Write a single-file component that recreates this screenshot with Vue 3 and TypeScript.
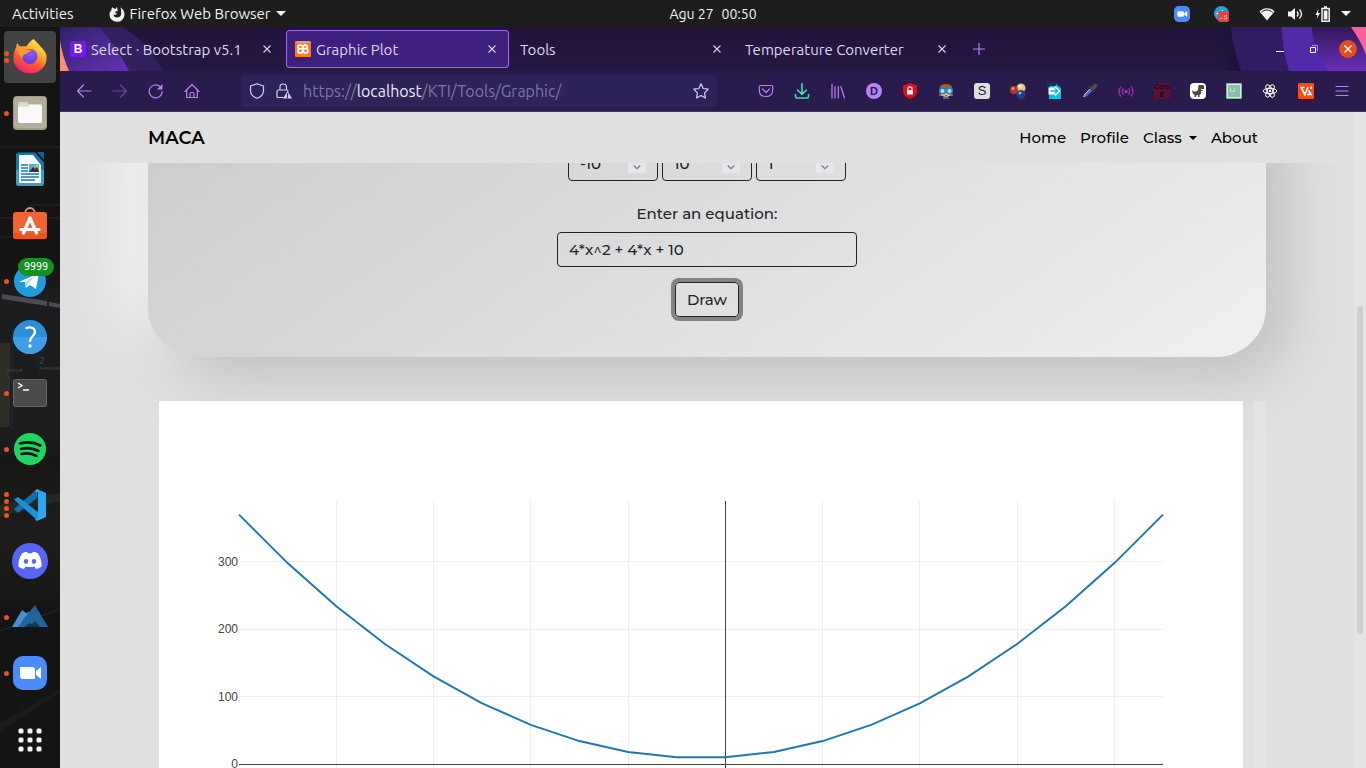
<script setup lang="ts">
import { computed, ref } from 'vue'

interface DockEntry {
  id: string
  label: string
  dots: number
  active?: boolean
}

const dock: DockEntry[] = [
  { id: 'firefox', label: 'Firefox', dots: 2, active: true },
  { id: 'files', label: 'Files', dots: 1 },
  { id: 'writer', label: 'LibreOffice Writer', dots: 0 },
  { id: 'software', label: 'Ubuntu Software', dots: 0 },
  { id: 'telegram', label: 'Telegram', dots: 1 },
  { id: 'help', label: 'Help', dots: 0 },
  { id: 'terminal', label: 'Terminal', dots: 1 },
  { id: 'spotify', label: 'Spotify', dots: 1 },
  { id: 'code', label: 'Visual Studio Code', dots: 4 },
  { id: 'discord', label: 'Discord', dots: 0 },
  { id: 'mountain', label: 'Mountain', dots: 1 },
  { id: 'zoom', label: 'Zoom', dots: 1 },
]

const tabs = [
  { id: 'bootstrap', title: 'Select · Bootstrap v5.1' },
  { id: 'plot', title: 'Graphic Plot' },
  { id: 'tools', title: 'Tools' },
  { id: 'temp', title: 'Temperature Converter' },
]
const activeTab = ref('plot')

const extensions = [
  'pocket', 'download', 'library', 'dark', 'blocker', 'reader', 'stylus', 'balls', 'forward',
  'picker', 'signal', 'cors', 'dino', 'frame', 'react', 'angle', 'menu',
]

const start = ref('-10')
const end = ref('10')
const step = ref('1')
const equation = ref('4*x^2 + 4*x + 10')
const ranges = [
  { id: 'start', label: 'Start', model: start },
  { id: 'end', label: 'End', model: end },
  { id: 'step', label: 'Step', model: step },
]

const scroll = { offset: 194, length: 328, total: 656 }
const thumbStyle = {
  top: `${(scroll.offset / scroll.total) * 100}%`,
  height: `${(scroll.length / scroll.total) * 100}%`,
}

const plot = { left: 80, right: 1004, top: 100, zero: 363, perHundred: 67.4 }
const unit = (plot.right - plot.left) / 19
const px = (x: number) => plot.left + (x + 10) * unit
const py = (y: number) => plot.zero - (y * plot.perHundred) / 100
const curve = computed(() =>
  Array.from({ length: 20 }, (_, i) => i - 10)
    .map((x) => `${px(x).toFixed(1)},${py(4 * x * x + 4 * x + 10).toFixed(1)}`)
    .join(' '),
)
const columns = [-8, -6, -4, -2, 2, 4, 6, 8].map((x) => Math.floor(px(x)))
const rows = [100, 200, 300].map((v) => ({
  value: v,
  y: Math.floor(py(v)),
  baseline: Math.round(py(v)) + 4,
}))
</script>

<template>
  <div class="desktop">
    <header class="topbar">
      <div class="top-left">
        <button type="button">Activities</button>
        <button type="button" class="app-menu">
          <svg width="16" height="16" viewBox="0 0 16 16"><path d="M8 0.5 6.8 3C5 2.5 4 2 3.2 1.2 2.6 2 2.4 3 2.5 4 1 5.5.4 7 .5 8.800A7.500 7.200 0 0 0 15.500 8.500C15.500 5 13.500 2.500 11 1.200 12 2.500 12.300 4 12 5.500 12.800 8.500 11.500 11.500 8 11.500 6 11.500 4.700 10.300 4.500 8.500 6 9.300 7.500 8.500 8 7.500 6.500 7.200 6 6.500 6 5.800L8.500 5C9 3.500 8 2.500 8 .5z" fill="#f2f2f2" /></svg>
          <span>Firefox Web Browser</span>
          <svg width="10" height="6" viewBox="0 0 10 6"><path d="M0 0H10L5 5z" fill="#f2f2f2" /></svg>
        </button>
      </div>
      <div class="clock"><span>Agu 27</span><span>00:50</span></div>
      <div class="top-right">
        <svg class="tray-zoom" width="16" height="16" viewBox="0 0 34 34"><rect width="34" height="34" rx="10" fill="#4a8cff" /><rect x="7" y="11" width="14" height="12" rx="3" fill="#fff" /><path d="M22 15l6-4v12l-6-4z" fill="#fff" /></svg>
        <svg class="tray-tg" width="16" height="16" viewBox="0 0 16 16"><circle cx="7.500" cy="7.500" r="7.500" fill="#2ca0dc" /><path d="M2 7.500 9 4v2L5 9z" fill="#fff" /><rect x="4" y="5" width="11" height="11" rx="2" fill="#f43b3b" /><path d="M5.500 12.500h1M7.500 12.500h1M13 9.500h-2.500v1.500h2v2h-2.500" stroke="#ffd0d0" fill="none" stroke-width=".8" /></svg>
        <svg class="tray-wifi" width="16" height="14" viewBox="0 0 16 14"><path d="M.5 4.500C4.500 0 11.500 0 15.500 4.500L8 13.500z" fill="#f2f2f2" /><path d="M2.300 5.300C5.500 2.300 10.500 2.300 13.700 5.300" stroke="#1d1d1d" stroke-width="1" fill="none" /></svg>
        <svg class="tray-vol" width="16" height="14" viewBox="0 0 16 14"><path d="M1 4.500h3L8 1v12L4 9.500H1z" fill="#f2f2f2" /><path d="M10 4.500q2 2.500 0 5M12.500 2.500q4 4.500 0 9" stroke="#f2f2f2" stroke-width="1.400" fill="none" /></svg>
        <svg class="tray-bat" width="16" height="16" viewBox="0 0 16 16"><path d="M3.500 3 .5 9h2l-.8 4L5 7H3z" fill="#f2f2f2" /><path d="M9 1h3M7 2.500h7.200v12.700H7z" stroke="#f2f2f2" stroke-width="1.500" fill="none" /><path d="M8.700 4.500h3.800v9H8.700z" fill="#f2f2f2" /></svg>
        <svg class="tray-caret" width="10" height="6" viewBox="0 0 10 6"><path d="M0 0H10L5 5z" fill="#f2f2f2" /></svg>
      </div>
    </header>

    <div class="workspace">
      <nav class="dock" aria-label="Dock">
        <svg class="dock-photo" width="60" height="741" viewBox="0 0 60 741" aria-hidden="true">
          <defs>
            <linearGradient id="wall" x1="0" y1="0" x2="0" y2="1"><stop offset="0" stop-color="#141414" /><stop offset=".15" stop-color="#1c1d1f" /><stop offset=".85" stop-color="#1b1c1e" /><stop offset="1" stop-color="#161616" /></linearGradient>
            <linearGradient id="haze" x1="0" y1="0" x2="0" y2="1"><stop offset="0" stop-color="#161616" /><stop offset=".5" stop-color="#1e1d1b" /><stop offset="1" stop-color="#161616" /></linearGradient>
          </defs>
          <path d="M0 120h60M30 178h30M0 191h60M0 210h48" stroke="#332e24" stroke-width="1" opacity=".7" />
          <path d="M0 240h60v200H0z" fill="url(#wall)" />
          <path d="M2 267l45 7v5L2 272zM49 275l11 2v4l-11-2z" fill="#4d4956" />
          <path d="M0 316h10v84H0z" fill="#2f2d28" />
          <path d="M12 308v95M38 326v14" stroke="#292a2c" />
          <text x="39" y="337" class="sign big">2</text><text x="39" y="343" class="sign">Avenue</text><text x="7" y="345" class="sign">renue</text>
          <path d="M0 430h60v150H0z" fill="url(#haze)" />
          <path d="M0 478q34-8 60-12v8Q30 482 0 490z" fill="#282621" />
          <path d="M0 604 60 582" stroke="#2b2b2b" />
          <path d="M0 696 60 662v4L0 704z" fill="#1b1b1a" />
        </svg>
        <button v-for="app in dock" :key="app.id" type="button" class="dock-item" :class="{ active: app.active }" :aria-label="app.label">
          <span class="dots"><i v-for="n in app.dots" :key="n"></i></span>
          <svg v-if="app.id === 'firefox'" width="36" height="36" viewBox="0 0 36 36">
            <defs>
              <linearGradient id="ffa" x1=".8" y1="0" x2=".3" y2="1"><stop offset="0" stop-color="#fff44f" /><stop offset=".35" stop-color="#ffb22c" /><stop offset=".65" stop-color="#ff5a36" /><stop offset="1" stop-color="#e91e78" /></linearGradient>
              <radialGradient id="ffb" cx=".55" cy=".3" r=".7"><stop offset="0" stop-color="#9059ff" /><stop offset="1" stop-color="#5b3fd0" /></radialGradient>
            </defs>
            <path d="M22 0c1 2 5 5 7 8 5 5 6 8 5.500 12A16.500 15 0 0 1 1.500 19C1.500 14 3 10 4.500 8 4 6.500 4.500 4.500 5.500 4 6 6 7 7 9 7.500c2-.5 4-.5 5.500 0C16 5 19 1 22 0z" fill="url(#ffa)" />
            <circle cx="18" cy="17.500" r="7.500" fill="url(#ffb)" />
            <path d="M5.500 8.500c3-.5 6-.5 9 2.500h5c-1 2-4 2-5 4-1.500 0-4 1-4 4-3-2-4-5-5-10.500z" fill="#ff9a2c" />
          </svg>
          <svg v-else-if="app.id === 'files'" width="36" height="36" viewBox="0 0 36 36"><rect x="1" y="1" width="34" height="34" rx="4" fill="#a39b8a" /><rect x="2" y="2" width="32" height="31" rx="3" fill="#b3ad9e" /><path d="M6 9q0-2 2-2h7l2 2h11q2 0 2 2v15q0 2-2 2H8q-2 0-2-2z" fill="#dcd8cd" /><path d="M6 13q0-1.500 2-1.500h8L18 10h10q2 0 2 2v14q0 2-2 2H8q-2 0-2-2z" fill="#fafafa" /></svg>
          <svg v-else-if="app.id === 'writer'" width="36" height="36" viewBox="0 0 36 36"><path d="M6 1.500h17l9 10V32q0 3-3 3H7q-3 0-3-3V3z" fill="#1878ac" /><path d="M4 19h28v13q0 3-3 3H7q-3 0-3-3z" fill="#3c9bcf" /><path d="M7 4h14l8 10v18H7z" fill="#f8fbfd" /><path d="M25 1h7v8z" fill="#146090" /><path d="M9 14h7M9 17h7M9 20h7M9 23h18M9 26h18M9 29h14" stroke="#1878ac" stroke-width="1.500" /><path d="M17 13h10v8H17z" fill="#69a8c8" /><path d="M17 21l4-5 2 2 2-2 2 5z" fill="#333" /><circle cx="25" cy="15" r="1.200" fill="#ffc82e" /></svg>
          <svg v-else-if="app.id === 'software'" width="36" height="36" viewBox="0 0 36 36"><path d="M13 7c0-8 10-8 10 0" stroke="#bfa980" stroke-width="1.800" fill="none" /><rect x="1" y="5" width="34" height="27" rx="3" fill="#f26332" /><path d="M1 26h34v3q0 3-3 3H4q-3 0-3-3z" fill="#e95420" /><path d="M18 11 11.500 26M18 11l6.500 15M9 22.500h18" stroke="#fff" stroke-width="3.200" stroke-linecap="round" stroke-linejoin="round" fill="none" /></svg>
          <svg v-else-if="app.id === 'telegram'" width="36" height="36" viewBox="0 0 36 36"><circle cx="18" cy="18" r="16" fill="#239bd8" /><path d="M7 19 27 10l-3 16-6-4-4 3-1-6z" fill="#fff" /><path d="M13 19 24 12l-8 9-2 4z" fill="#b9dcec" /></svg>
          <svg v-else-if="app.id === 'help'" width="36" height="36" viewBox="0 0 36 36"><circle cx="18" cy="18" r="17" fill="#2b8edb" /><path d="M1 18a17 17 0 0 0 34 0z" fill="#3f9fe6" /><path d="M13.500 9.500q5-2.500 8.500.5c2.500 3 0 6-2 8-1.500 1.500-2 2.500-2 5" fill="none" stroke="#fff" stroke-width="2.400" /><circle cx="18" cy="27" r="1.700" fill="#fff" /></svg>
          <svg v-else-if="app.id === 'terminal'" width="36" height="36" viewBox="0 0 36 36"><rect x="1" y="4" width="34" height="28" rx="3" fill="#666" /><rect x="2" y="5" width="32" height="26" rx="2" fill="#4b4b4b" /><path d="M6 8l4 2.500L6 13M11 15h6" stroke="#fff" stroke-width="1.400" fill="none" /></svg>
          <svg v-else-if="app.id === 'spotify'" width="36" height="36" viewBox="0 0 36 36"><circle cx="18" cy="18" r="16" fill="#1ed760" /><path d="M8 12.500q11-3 20.500 2M9 18q9-2.500 17.500 2M9.500 23q8-2 15 2" stroke="#111" stroke-width="2.600" stroke-linecap="round" fill="none" /></svg>
          <svg v-else-if="app.id === 'code'" width="36" height="36" viewBox="0 0 36 36"><path d="M2 22 25 2v9L6 26z" fill="#0f6fae" /><path d="M2 12.500 6 10 26 25v9z" fill="#1c8fd6" /><path d="M25 2l9 4v24l-9 4-3-2q4 1 4-3V7q0-3-4-2z" fill="#2ba6f0" /></svg>
          <svg v-else-if="app.id === 'discord'" width="36" height="36" viewBox="0 0 36 36"><circle cx="18" cy="18" r="18" fill="#5865f2" /><path d="M10 10.500q2-1.500 5-1.700l1 1.500h4l1-1.500q3 .2 5 1.700 4 6 3.500 13-2.500 2-5.500 2.500l-1.500-2.500q-4.500 1-9 0L12 26q-3-.5-5.500-2.500Q6 16.500 10 10.500z" fill="#fff" /><ellipse cx="14" cy="18.500" rx="2.200" ry="2.400" fill="#5865f2" /><ellipse cx="22" cy="18.500" rx="2.200" ry="2.400" fill="#5865f2" /></svg>
          <svg v-else-if="app.id === 'mountain'" width="36" height="36" viewBox="0 0 36 36"><path d="M0 28 10 11l4 3 3-1 3 8v7z" fill="#4a90d0" /><path d="M6 28l8-11 9-11 13 22z" fill="#1f659c" /><path d="M13 28l4-4 3 1 3-3 5 6z" fill="#123c44" /></svg>
          <svg v-else width="36" height="36" viewBox="0 0 36 36"><rect x="1" y="1" width="34" height="34" rx="10" fill="#4a8cff" /><path d="M8 12h12q3 0 3 3v9H11q-3 0-3-3zM24 16l5-4v12l-5-4z" fill="#fff" /></svg>
          <span v-if="app.id === 'telegram'" class="count">9999</span>
        </button>
        <button type="button" class="dock-item show-apps" aria-label="Show applications">
          <svg width="36" height="36" viewBox="0 0 36 36" fill="#f4f4f4"><g v-for="r in 3" :key="r"><rect v-for="c in 3" :key="c" :x="c * 9 - 2.500" :y="r * 9 - 2.500" width="5" height="5" rx="1.500" /></g></svg>
        </button>
      </nav>

      <section class="browser">
        <div class="tabstrip">
          <svg class="wave" width="180" height="44" viewBox="0 0 180 44" aria-hidden="true">
            <defs><linearGradient id="wl" x1="0" y1="0" x2="1" y2="1"><stop offset="0" stop-color="#30206a" /><stop offset="1" stop-color="#6733b4" /></linearGradient></defs>
            <path d="M0 0h62q26 14 41 44H0z" fill="#33205f" /><path d="M0 0h39q18 20 30 44H0z" fill="url(#wl)" /><path d="M0 14q3 17 9 30H0z" fill="#ff8f70" />
          </svg>
          <svg class="wave end" width="150" height="44" viewBox="0 0 150 44" aria-hidden="true">
            <defs>
              <linearGradient id="wr" x1="0" y1="0" x2="0" y2="1"><stop offset="0" stop-color="#31195c" /><stop offset="1" stop-color="#6a2fb7" /></linearGradient>
              <linearGradient id="wd" x1="0" y1="0" x2="1" y2="0"><stop offset="0" stop-color="#1c1038" stop-opacity="0" /><stop offset="1" stop-color="#1b0e37" /></linearGradient>
            </defs>
            <path d="M0 0h15l11 44H0z" fill="url(#wd)" /><path d="M15 0h135v44H25Q17 23 15 0z" fill="#321c62" /><path d="M66 0h84v44H73Q66 22 66 0z" fill="#5129a9" /><path d="M96 0h54v44h-38Q96 20 96 0z" fill="url(#wr)" /><path d="M135 0h15v28Q145 14 135 0z" fill="#ff5e9d" />
          </svg>
          <div class="tabs" role="tablist">
            <div v-for="tab in tabs" :key="tab.id" class="tab" :class="{ current: tab.id === activeTab }">
              <button type="button" role="tab" class="tab-title" :aria-selected="tab.id === activeTab" @click="activeTab = tab.id">
                <span v-if="tab.id === 'bootstrap'" class="fav-b">B</span>
                <svg v-if="tab.id === 'plot'" width="16" height="16" viewBox="0 0 16 16"><rect width="16" height="16" rx="1" fill="#fb7a24" /><path d="M2 1h12" stroke="#ffc08d" /><path d="M5.500 7.700h5M5.500 4.200a1.900 1.900 0 1 0 0 3.500 2.200 2.200 0 1 0 1.700 3.300L8 9.500l.8 1.500a2.200 2.200 0 1 0 1.700-3.300 1.900 1.900 0 1 0-1.700-3L8 6l-.8-1.300Q6.500 4 5.500 4.200z" fill="none" stroke="#fff" stroke-width="1.800" /></svg>
                <span>{{ tab.title }}</span>
              </button>
              <button type="button" class="tab-close" :aria-label="`Close ${tab.title}`"><svg width="8" height="8" viewBox="0 0 8 8"><path d="M.5.5l7 7M7.500.5l-7 7" stroke="#d9d2f0" stroke-width="1.100" /></svg></button>
            </div>
          </div>
          <button type="button" class="new-tab" aria-label="New tab"><svg width="12" height="12" viewBox="0 0 12 12"><path d="M6 0v12M0 6h12" stroke="#b884f4" stroke-width="1.200" /></svg></button>
          <div class="window-buttons">
            <button type="button" aria-label="Minimize"><svg width="8" height="8" viewBox="0 0 8 8"><path d="M0 6.500h8" stroke="#fff" /></svg></button>
            <button type="button" aria-label="Restore"><svg width="8" height="8" viewBox="0 0 8 8"><path d="M.5 2.500h5v5h-5z" stroke="#fff" fill="none" /><path d="M2 .5h5.500V6" stroke="#a691d8" fill="none" /></svg></button>
            <button type="button" class="quit" aria-label="Close window"><svg width="8" height="8" viewBox="0 0 8 8"><path d="M.5.5l7 7M7.500.5l-7 7" stroke="#fff" stroke-width="1.400" /></svg></button>
          </div>
        </div>

        <div class="toolbar">
          <button type="button" aria-label="Back"><svg width="16" height="16" viewBox="0 0 16 16" class="line"><path d="M15 8H1.500M7.500 2 1.500 8l6 6" /></svg></button>
          <button type="button" class="dim" aria-label="Forward"><svg width="16" height="16" viewBox="0 0 16 16" class="line"><path d="M1 8h13.500M8.500 2l6 6-6 6" /></svg></button>
          <button type="button" aria-label="Reload"><svg width="16" height="16" viewBox="0 0 16 16" class="line"><path d="M14.200 8.500A6.500 6.500 0 1 1 12 3.500" /><path d="M14.500 1v5.500H9z" fill="#b884f4" stroke="none" /></svg></button>
          <button type="button" aria-label="Home"><svg width="16" height="16" viewBox="0 0 16 16" class="line"><path d="M1 8.500 8 1.500l7 7M2.700 7.500v7h10.600v-7M6 14.500v-4q0-1 1-1h2q1 0 1 1v4" /></svg></button>
          <div class="urlbar">
            <svg width="16" height="16" viewBox="0 0 16 16" class="line pale"><path d="M8 .8 14.500 3v4.500Q14.500 13 8 15.300 1.500 13 1.500 7.500V3z" /></svg>
            <svg width="16" height="16" viewBox="0 0 16 16" class="line pale"><path d="M4 7V4q0-3 3.200-3T10.500 4v3M7 14.500H2q-1 0-1-1V8q0-1 1-1h9q1 0 1 1" /><path d="M11.500 8 16 15.500H7z" fill="#d8cff0" stroke="none" /><path d="M11.500 10.500v2.500M11.500 14v1" stroke="#2d2358" /></svg>
            <a href="https://localhost/KTI/Tools/Graphic/" class="url">https://<b>localhost</b>/KTI/Tools/Graphic/</a>
            <svg width="16" height="16" viewBox="0 0 16 16" class="line pale star"><path d="M8 .8l2.200 4.700 5 .7-3.600 3.600.8 5.200L8 12.500 3.600 15l.8-5.200L.8 6.200l5-.7z" /></svg>
          </div>
          <div class="extensions">
            <button v-for="name in extensions" :key="name" type="button" :aria-label="name">
              <svg v-if="name === 'pocket'" width="16" height="16" viewBox="0 0 16 16" class="line"><path d="M2.500 2.500h11q1.200 0 1.200 1.200V7q0 6.500-6.700 6.500T1.300 7V3.700q0-1.200 1.200-1.200zM4.500 6 8 9.500 11.500 6" /></svg>
              <svg v-else-if="name === 'download'" width="16" height="16" viewBox="0 0 16 16" class="line green"><path d="M8 .5v10.500M3.500 7 8 11.300 12.500 7M1.500 11.500v2q0 1.500 1.500 1.500h10q1.500 0 1.500-1.500v-2" /></svg>
              <svg v-else-if="name === 'library'" width="16" height="16" viewBox="0 0 16 16" class="line"><path d="M2 1v14M5 3.500V15M8.300 3.500V15M10.800 3.500 14.500 15" /></svg>
              <span v-else-if="name === 'dark'" class="ext-d">D</span>
              <svg v-else-if="name === 'blocker'" width="16" height="16" viewBox="0 0 16 16"><path d="M8 0l7 2.500V8q0 5.500-7 8-7-2.500-7-8V2.500z" fill="#e80b14" /><path d="M6 8V5.500q0-1.700 2-1.700t2 1.700V8" stroke="#fff" stroke-width="1.200" fill="none" /><path d="M5 7.200h6v4.300H5z" fill="#fff" /></svg>
              <svg v-else-if="name === 'reader'" width="16" height="16" viewBox="0 0 16 16"><path d="M2 9Q0 1 8 1t6 8l1 4H1z" fill="#9a6528" /><path d="M3 6h10v6q-5 4-10 0z" fill="#f0b78a" /><circle cx="4.500" cy="8" r="2.800" fill="#b5e2fb" stroke="#1c80d0" stroke-width="1.500" /><circle cx="11.500" cy="8" r="2.800" fill="#b5e2fb" stroke="#1c80d0" stroke-width="1.500" /><path d="M7 12.500h2" stroke="#b5553c" /><path d="M5 15h6" stroke="#3d91cc" stroke-width="1.500" /></svg>
              <span v-else-if="name === 'stylus'" class="ext-s">S</span>
              <svg v-else-if="name === 'balls'" width="16" height="16" viewBox="0 0 16 16"><circle cx="11" cy="5" r="4.500" fill="#e6c982" /><circle cx="4" cy="7" r="4" fill="#b9382b" /><circle cx="11" cy="11.500" r="4.500" fill="#27417f" /><circle cx="3" cy="5.500" r="1.300" fill="#f6b0a0" /><circle cx="10" cy="3.500" r="1.400" fill="#fff4d2" /><circle cx="10" cy="10" r="1.500" fill="#8eaaf0" /></svg>
              <svg v-else-if="name === 'forward'" width="16" height="16" viewBox="0 0 16 16"><path d="M3 1h7l5 4v11H3z" fill="#08c4e2" /><path d="M1 0h9v3H4v3H1z" fill="#063c64" /><path d="M2.500 4.500h6.500V2.500L14.500 8 9 13.500v-2H2.500z" fill="#fff" /><path d="M4.500 8h7M9 5.500 11.500 8 9 10.500" stroke="#08b6d8" fill="none" stroke-width="1.400" /></svg>
              <svg v-else-if="name === 'picker'" width="16" height="16" viewBox="0 0 16 16"><path d="M1.500 14.500 2.500 11.500 8.500 5.500l2 2-6 6z" fill="#536ddc" /><path d="M1.500 14l1.500-3 5.500-5.500" stroke="#c7cbe5" fill="none" /><path d="M7.500 4l4.500 4.500" stroke="#3b3b3b" stroke-width="2" stroke-linecap="round" /><path d="M10.500 5.500l3-3" stroke="#4d4d4d" stroke-width="4" stroke-linecap="round" /></svg>
              <svg v-else-if="name === 'signal'" width="16" height="16" viewBox="0 0 16 16"><circle cx="8" cy="8.500" r="1.700" fill="#b423c9" /><path d="M5.500 5.500q-2.500 3 0 6M10.500 5.500q2.500 3 0 6M3 3.500q-4 5 0 10M13 3.500q4 5 0 10" stroke="#9a2db5" stroke-width="1.300" fill="none" /></svg>
              <span v-else-if="name === 'cors'" class="ext-cors">Cors<br />E</span>
              <svg v-else-if="name === 'dino'" width="16" height="16" viewBox="0 0 16 16"><rect width="16" height="16" rx="4" fill="#fff" /><path d="M8.500 2h4.500l1 1v3h-3v1h1.500v1H11v2.500L9.500 12v2H8v-2H7l-1 1v1H4.500v-2L2.500 10V7L4 8.500h2L8 7z" fill="#4b4b4b" /></svg>
              <svg v-else-if="name === 'frame'" width="16" height="16" viewBox="0 0 16 16"><rect width="16" height="16" rx="1" fill="#79b89a" /><path d="M1.500 1.500h13v13h-13z" stroke="#d8eee2" fill="#8ac0a5" /><path d="M4.500 8.500h4v-4M4.500 4.500v4" stroke="#c5e3d3" fill="none" /></svg>
              <svg v-else-if="name === 'react'" width="16" height="16" viewBox="0 0 16 16"><rect width="16" height="16" fill="#251d43" /><g fill="none" stroke="#fff"><ellipse cx="8" cy="8" rx="6.800" ry="2.700" /><ellipse cx="8" cy="8" rx="6.800" ry="2.700" transform="rotate(60 8 8)" /><ellipse cx="8" cy="8" rx="6.800" ry="2.700" transform="rotate(120 8 8)" /></g><circle cx="8" cy="8" r="1.200" fill="#fff" /></svg>
              <svg v-else-if="name === 'angle'" width="16" height="16" viewBox="0 0 16 16"><rect width="16" height="16" rx="1" fill="#ff4a12" /><path d="M6.500 4.500H3.200L6.800 11.500 10.200 4M9 11.500h4L10.500 7.500M13 3.500v2.500" stroke="#fff" stroke-width="1.700" fill="none" /></svg>
              <svg v-else width="16" height="16" viewBox="0 0 16 16" class="line"><path d="M2 3.500h12M2 8h12M2 12.500h12" /></svg>
            </button>
          </div>
        </div>

        <div class="viewport">
          <div class="site">
            <nav class="navbar">
              <a href="#" class="brand">MACA</a>
              <ul>
                <li><a href="#">Home</a></li>
                <li><a href="#">Profile</a></li>
                <li><a href="#" class="dropdown">Class</a></li>
                <li><a href="#">About</a></li>
              </ul>
            </nav>
            <main class="content">
              <form class="card" @submit.prevent>
                <div class="range-row">
                  <div v-for="field in ranges" :key="field.id" class="number">
                    <input :id="field.id" v-model="field.model.value" type="number" :aria-label="field.label" />
                    <span class="spinner"><svg width="8" height="5" viewBox="0 0 8 5"><path d="M.7.5 4 3.800 7.300.5" fill="none" stroke="#85858f" stroke-width="1.500" /></svg></span>
                  </div>
                </div>
                <label for="equation">Enter an equation:</label>
                <input id="equation" v-model="equation" type="text" class="equation" />
                <button type="submit" class="draw">Draw</button>
              </form>
              <section class="chart">
                <svg viewBox="0 0 1084 450" role="img" aria-label="Plot of the equation">
                  <rect width="1084" height="450" fill="#fff" />
                  <g stroke="#eee">
                    <path v-for="x in columns" :key="x" :d="`M${x + 0.5} 100V370`" />
                    <path v-for="row in rows" :key="row.value" :d="`M80 ${row.y + 0.5}H1004`" />
                  </g>
                  <path d="M566.500 100V370M80 363.500H1004" stroke="#444" />
                  <polyline :points="curve" fill="none" stroke="#1f77b4" stroke-width="2" />
                  <g class="ticks">
                    <text v-for="row in rows" :key="row.value" x="79" :y="row.baseline">{{ row.value }}</text>
                    <text x="79" y="367">0</text>
                  </g>
                </svg>
                <div class="chart-track"></div>
              </section>
            </main>
          </div>
          <div class="scrollbar"><div class="thumb" :style="thumbStyle"></div></div>
        </div>
      </section>
    </div>
  </div>
</template>

<style>
body {
  margin: 0;
  overflow: hidden;
}
</style>

<style scoped>
* {
  box-sizing: border-box;
}
button {
  border: 0;
  padding: 0;
  background: none;
  font: inherit;
  color: inherit;
}
svg {
  display: block;
  flex: none;
}
a {
  color: inherit;
  text-decoration: none;
}
.desktop {
  display: flex;
  flex-direction: column;
  height: 100vh;
  overflow: hidden;
  background: #171717;
  font-family: Ubuntu, "Open Sans", "Noto Sans", sans-serif;
  font-size: 15px;
  color: #f2f2f2;
}
.topbar {
  display: grid;
  grid-template-columns: 1fr auto 1fr;
  align-items: center;
  height: 27px;
  flex: none;
  background: #1d1d1d;
}
.top-left,
.app-menu,
.top-right {
  display: flex;
  align-items: center;
}
.top-left {
  padding-left: 12px;
  gap: 35px;
}
.app-menu {
  gap: 5px;
}
.clock {
  display: flex;
  gap: 8px;
  padding-left: 60px;
  font-size: 14px;
}
.top-right {
  justify-content: flex-end;
  padding-right: 15px;
}
.tray-zoom {
  margin-right: 24px;
}
.tray-tg {
  margin-right: 29px;
}
.tray-wifi {
  margin-right: 12px;
}
.tray-vol {
  margin-right: 12px;
}
.tray-bat {
  margin-right: 10px;
}
.workspace {
  display: flex;
  flex: 1;
  min-height: 0;
}
.dock {
  position: relative;
  display: flex;
  flex-direction: column;
  width: 60px;
  flex: none;
  padding-top: 2px;
  background: #141414;
  overflow: hidden;
}
.dock-photo {
  position: absolute;
  inset: 0;
}
.sign {
  font-size: 6px;
  fill: #4c4f52;
}
.big {
  font-size: 10px;
}
.dock-item {
  position: relative;
  display: flex;
  align-items: center;
  justify-content: center;
  height: 52px;
  margin: 2px 4px;
  flex: none;
  border-radius: 4px;
}
.active {
  background: #434343;
}
.dots {
  position: absolute;
  left: 0;
  display: flex;
  flex-direction: column;
  gap: 2px;
}
.dots i {
  width: 5px;
  height: 5px;
  border-radius: 50%;
  background: #e95420;
}
.count {
  position: absolute;
  top: 3px;
  left: 14px;
  width: 36px;
  height: 18px;
  border-radius: 9px;
  background: #12921f;
  color: #fff;
  font: 10px/18px "DejaVu Sans Mono", monospace;
  text-align: center;
}
.show-apps {
  margin-top: auto;
}
.browser {
  display: flex;
  flex: 1;
  flex-direction: column;
  min-width: 0;
}
.tabstrip {
  position: relative;
  display: flex;
  align-items: center;
  height: 44px;
  flex: none;
  background: linear-gradient(#21133c, #261844);
  color: #dfd8f2;
}
.wave {
  position: absolute;
  left: 0;
  top: 0;
}
.end {
  left: auto;
  right: 0;
  width: 150px;
}
.tabs {
  position: relative;
  display: flex;
}
.tab {
  display: flex;
  align-items: center;
  justify-content: space-between;
  width: 223px;
  height: 38px;
  margin: 0 1px;
  padding: 0 13px 0 9px;
  border-radius: 4px;
}
.current {
  background: #3f1f7d;
  box-shadow: inset 0 0 0 1px #a16bf0;
}
.tab-title {
  display: flex;
  align-items: center;
  gap: 5px;
  white-space: nowrap;
}
.fav-b {
  width: 16px;
  height: 16px;
  border-radius: 2px;
  background: #7b16f7;
  color: #fff;
  font: bold 12px/16px "Liberation Sans", sans-serif;
  text-align: center;
}
.new-tab {
  position: relative;
  margin-left: 13px;
}
.window-buttons {
  position: relative;
  display: flex;
  align-items: center;
  gap: 16px;
  margin-left: auto;
  padding-right: 9px;
}
.window-buttons button {
  display: grid;
  place-items: center;
  width: 18px;
  height: 18px;
}
.quit {
  border-radius: 50%;
  background: #e24e1b;
}
.toolbar {
  display: flex;
  align-items: center;
  height: 41px;
  flex: none;
  padding: 0 6px;
  border-bottom: 1px solid #42307a;
  background: #291b4c;
}
.toolbar button {
  display: grid;
  place-items: center;
  width: 36px;
  height: 32px;
}
.line {
  fill: none;
  stroke: #b884f4;
  stroke-width: 1.2;
  stroke-linecap: round;
  stroke-linejoin: round;
}
.pale {
  stroke: #d8cff0;
}
.green {
  stroke: #44dcb0;
  stroke-width: 1.6;
}
.dim {
  opacity: 0.45;
}
.urlbar {
  display: flex;
  flex: 1;
  align-items: center;
  gap: 11px;
  height: 32px;
  min-width: 0;
  margin: 0 31px;
  padding: 0 8px;
  border-radius: 4px;
  background: #2d2358;
}
.url {
  flex: 1;
  font-size: 16px;
  color: #81769f;
}
.url b {
  font-weight: 400;
  color: #eee8fa;
}
.extensions {
  display: flex;
}
.ext-d,
.ext-s,
.ext-cors {
  width: 16px;
  height: 16px;
  text-align: center;
}
.ext-d {
  border-radius: 50%;
  background: #b884f4;
  color: #291b4c;
  font: bold 11px/16px "Liberation Sans", sans-serif;
}
.ext-s {
  border-radius: 3px;
  background: #dedede;
  color: #222;
  font: 13px/16px "Liberation Sans", sans-serif;
}
.ext-cors {
  background: #5d1233;
  color: #180813;
  font: bold 7px/8px "Liberation Sans", sans-serif;
}
.viewport {
  display: flex;
  flex: 1;
  min-height: 0;
  background: #e0e0e0;
}
.site {
  display: flex;
  flex: 1;
  flex-direction: column;
  min-width: 0;
  font-family: Montserrat, Inter, sans-serif;
  font-size: 15px;
  font-weight: 500;
  line-height: 22px;
  color: #212529;
}
.navbar {
  display: flex;
  align-items: center;
  justify-content: space-between;
  height: 51px;
  flex: none;
  padding: 0 96px 0 88px;
  background: #e0e0e0;
  color: #000;
}
.brand {
  font-size: 18px;
  font-weight: 600;
}
.navbar ul {
  display: flex;
  gap: 14px;
  margin: 0;
  padding: 0;
  list-style: none;
}
.dropdown {
  display: flex;
  align-items: center;
  gap: 7px;
}
.dropdown::after {
  content: "";
  border: 4px solid transparent;
  border-top-color: #000;
  border-bottom: 0;
}
.content {
  flex: 1;
  min-height: 0;
  overflow: hidden;
  padding: 0 88px;
}
.card {
  display: flex;
  flex-direction: column;
  align-items: center;
  margin-top: -80px;
  padding: 63px 0 40px;
  border-radius: 50px;
  background: linear-gradient(145deg, #cacaca, #f0f0f0);
  box-shadow: 20px 20px 60px #bebebe, -20px -20px 60px #fff;
}
.card input {
  height: 35px;
  width: 100%;
  margin: 0;
  padding: 0 11px;
  border: 1px solid #212529;
  border-radius: 4px;
  outline: 0;
  background: transparent;
  color: #212529;
  font: inherit;
}
.range-row {
  display: flex;
  gap: 4px;
  margin-bottom: 22px;
}
.number {
  position: relative;
  width: 90px;
}
.number input {
  appearance: textfield;
}
.spinner {
  position: absolute;
  right: 12px;
  top: 9px;
  display: flex;
  align-items: flex-end;
  justify-content: center;
  width: 18px;
  height: 18px;
  padding-bottom: 3px;
  background: #e6e6eb;
}
.card .equation {
  width: 300px;
  margin: 7px 0 15px;
}
.draw {
  height: 35px;
  padding: 0 11px;
  border: 1px solid #212529;
  border-radius: 4px;
  box-shadow: 0 0 0 4px rgba(33, 37, 41, 0.5);
}
.chart {
  display: flex;
  margin-top: 44px;
  padding-left: 11px;
}
.chart > svg {
  flex: 1;
  min-width: 0;
  margin-right: 11px;
}
.chart-track {
  width: 12px;
  background: #e3e3e3;
}
.ticks {
  font: 12px "Liberation Sans", sans-serif;
  text-anchor: end;
  fill: #444;
}
.scrollbar {
  position: relative;
  width: 12px;
  flex: none;
  background: #e4e4e4;
}
.thumb {
  position: absolute;
  left: 3px;
  width: 6px;
  border-radius: 3px;
  background: #cfcfcf;
}
</style>
